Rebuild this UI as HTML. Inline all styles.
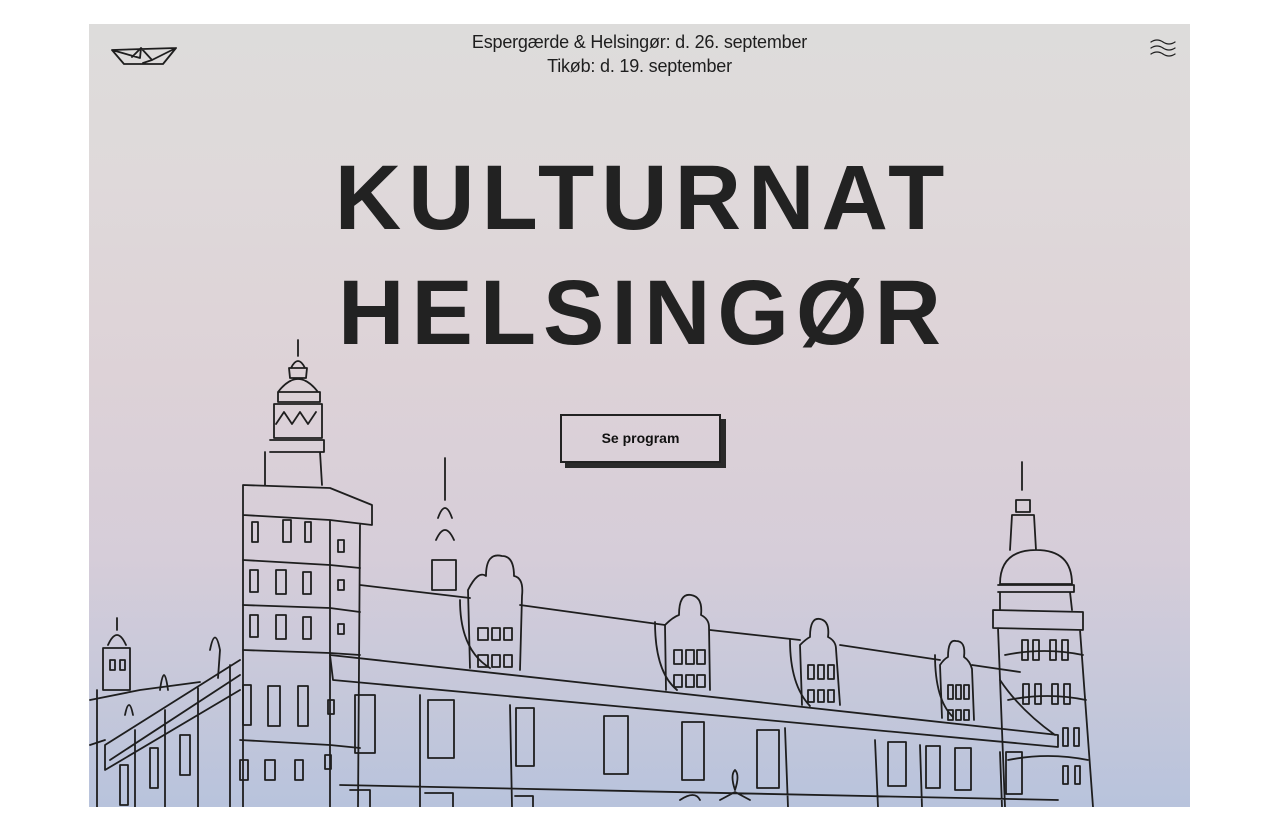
<!DOCTYPE html>
<html><head><meta charset="utf-8"><style>
html,body{margin:0;padding:0;background:#fff;width:1280px;height:832px;overflow:hidden}
#hero{position:absolute;left:89px;top:24px;width:1101px;height:783px;overflow:hidden;
background:linear-gradient(180deg,#dddcdb 0%,#dfd9da 20%,#ddd2d7 45%,#d6cdd9 68%,#c6c8da 85%,#b8c3dc 100%)}
.date{position:absolute;left:0;width:1101px;text-align:center;font-family:"Liberation Sans",sans-serif;font-size:18px;color:#1e1e1e;line-height:24px;letter-spacing:-0.2px}
.title{position:absolute;left:0;width:1101px;text-align:center;font-family:"Liberation Sans",sans-serif;font-weight:bold;font-size:92px;color:#222;line-height:90px;letter-spacing:7px;padding-left:7px;box-sizing:border-box}
.btn{position:absolute;left:471px;top:390px;width:161px;height:49px;border:2px solid #222;box-shadow:5px 5px 0 #2a2a2a;box-sizing:border-box;font-family:"Liberation Sans",sans-serif;font-weight:bold;font-size:14px;color:#111;text-align:center;line-height:45px}
svg{position:absolute;left:0;top:0}
</style></head><body>
<div id="hero">
<div class="date" style="top:6px">Espergærde &amp; Helsingør: d. 26. september</div>
<div class="date" style="top:30px">Tikøb: d. 19. september</div>
<div class="title" style="top:129px">KULTURNAT</div>
<div class="title" style="top:244px">HELSINGØR</div>
<div class="btn">Se program</div>
<svg width="1101" height="783" viewBox="89 24 1101 783" fill="none" stroke="#1e1e1e" stroke-width="1.8" stroke-linejoin="round" stroke-linecap="round">
<path d="M112 50 L176 48 L163 64 L124 64 Z M112 50 L140 58 L141 48 L152 60 L176 48 M141 48 L132 57 M152 60 L143 63"/>
<path d="M1151 42 q6-4 12 0 t12 0 M1151 48 q6-4 12 0 t12 0 M1151 54 q6-4 12 0 t12 0" stroke-width="1.3"/>
<path d="M298 340 L298 356 M291 368 q7-14 14 0 M289 368 L307 368 L306 378 L290 378 Z M278 392 q20-26 40 0 M278 392 L320 392 L320 402 L278 402 Z M274 404 L322 404 L322 438 L274 438 Z M276 424 l8-12 l8 12 l8-12 l8 12 l8-12 M270 440 L324 440 L324 452 L270 452 M265 452 L265 485 M320 452 L322 485"/>
<path d="M243 485 L330 488 L372 505 L372 525 L330 520 L243 515 Z M243 515 L243 807 M360 525 L358 807 M330 520 L330 807"/>
<path d="M243 560 L330 565 L360 568 M243 605 L330 608 L360 612 M243 650 L330 653 L360 655 M240 740 L330 745 L360 748"/>
<path d="M252 522 h6 v20 h-6z M283 520 h8 v22 h-8z M305 522 h6 v20 h-6z M338 540 h6 v12 h-6z"/>
<path d="M250 570 h8 v22 h-8z M276 570 h10 v24 h-10z M303 572 h8 v22 h-8z M338 580 h6 v10 h-6z"/>
<path d="M250 615 h8 v22 h-8z M276 615 h10 v24 h-10z M303 617 h8 v22 h-8z M338 624 h6 v10 h-6z"/>
<path d="M243 685 h8 v40 h-8z M268 686 h12 v40 h-12z M298 686 h10 v40 h-10z M328 700 h6 v14 h-6z"/>
<path d="M240 760 h8 v20 h-8z M265 760 h10 v20 h-10z M295 760 h8 v20 h-8z M325 755 h6 v14 h-6z"/>
<path d="M445 458 L445 500 M438 518 q7-20 14 0 M436 540 q9-20 18 0 M432 560 L456 560 L456 590 L432 590 Z"/>
<path d="M360 585 L470 598 M520 605 L665 625 M710 630 L800 640 M840 645 L940 660 M972 665 L1020 672"/>
<path d="M330 655 L1058 735 L1058 747 L333 680 Z M460 600 q0 50 30 68 M655 622 q0 50 22 68 M790 640 q0 45 20 66 M935 655 q0 45 18 62 M1000 680 q20 30 55 55"/>
<path d="M470 668 L468 590 q10-20 18-14 q0-24 16-20 q12 0 12 20 q10 2 8 20 L520 670 M478 628 h10 v12 h-10z M492 628 h8 v12 h-8z M504 628 h8 v12 h-8z M478 655 h10 v12 h-10z M492 655 h8 v12 h-8z M504 655 h8 v12 h-8z"/>
<path d="M666 690 L665 625 q8-8 14-10 q0-22 12-20 q12 2 10 20 q8 4 8 12 L710 690 M674 650 h8 v14 h-8z M686 650 h8 v14 h-8z M697 650 h8 v14 h-8z M674 675 h8 v12 h-8z M686 675 h8 v12 h-8z M697 675 h8 v12 h-8z"/>
<path d="M802 705 L800 645 q6-6 10-8 q0-20 10-18 q10 2 8 18 q8 4 8 12 L840 705 M808 665 h6 v14 h-6z M818 665 h6 v14 h-6z M828 665 h6 v14 h-6z M808 690 h6 v12 h-6z M818 690 h6 v12 h-6z M828 690 h6 v12 h-6z"/>
<path d="M942 718 L940 665 q4-6 8-8 q0-18 8-16 q10 0 8 16 q6 4 8 12 L974 720 M948 685 h5 v14 h-5z M956 685 h5 v14 h-5z M964 685 h5 v14 h-5z M948 710 h5 v10 h-5z M956 710 h5 v10 h-5z M964 710 h5 v10 h-5z"/>
<path d="M355 695 h20 v58 h-20z M428 700 h26 v58 h-26z M516 708 h18 v58 h-18z M604 716 h24 v58 h-24z M682 722 h22 v58 h-22z M757 730 h22 v58 h-22z M888 742 h18 v44 h-18z M926 746 h14 v42 h-14z M955 748 h16 v42 h-16z M1006 752 h16 v42 h-16z"/>
<path d="M420 695 L420 807 M510 705 L512 807 M785 728 L788 807 M875 740 L878 807 M920 745 L922 807 M1000 752 L1002 807 M340 785 L1058 800 M350 790 h20 v17 M425 793 h28 v14 M515 796 h18 v11 M680 800 q15-10 20 0 M735 790 q-5-15 0-20 q5 5 0 20 M720 800 l15-8 l15 8"/>
<path d="M1022 462 L1022 490 M1016 500 L1030 500 L1030 512 L1016 512 Z M1012 515 L1034 515 L1036 550 M1012 515 L1010 550 M1000 584 q0-34 36-34 q36 0 36 34 Z M998 585 L1074 585 L1074 592 L998 592 M1000 592 L1000 610 M1070 592 L1072 610"/>
<path d="M993 610 L1083 612 L1083 630 L993 628 Z M998 628 L1005 807 M1080 630 L1093 807 M1005 655 q40-8 78 0 M1008 700 q40-8 78 0 M1008 760 q40-8 80 0"/>
<path d="M1022 640 h6 v20 h-6z M1033 640 h6 v20 h-6z M1050 640 h6 v20 h-6z M1062 640 h6 v20 h-6z M1023 684 h6 v20 h-6z M1035 684 h6 v20 h-6z M1052 684 h6 v20 h-6z M1064 684 h6 v20 h-6z M1063 728 h5 v18 h-5z M1074 728 h5 v18 h-5z M1063 766 h5 v18 h-5z M1075 766 h5 v18 h-5z"/>
<path d="M240 660 L105 745 L105 770 L240 690 M240 675 L110 760 M230 665 L230 807 M198 688 L198 807 M165 710 L165 807 M135 730 L135 807 M180 735 h10 v40 h-10z M150 748 h8 v40 h-8z M120 765 h8 v40 h-8z"/>
<path d="M117 618 L117 630 M108 645 q9-20 18 0 M103 648 L130 648 L130 690 L103 690 Z M110 660 h5 v10 h-5z M120 660 h5 v10 h-5z M97 690 L97 807 M90 700 L140 690 L200 682 M210 650 q5-25 10 0 L218 678 M160 690 q4-30 8 0 M125 715 q4-20 8 0 M90 745 L105 740"/>
</svg>
</div>
</body></html>
